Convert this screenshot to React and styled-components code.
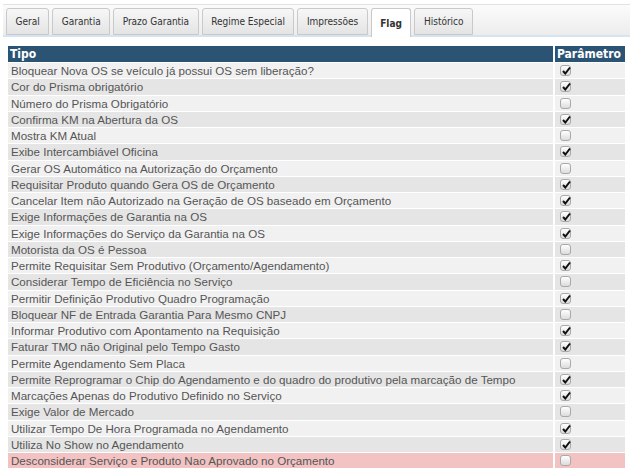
import React from 'react';
import styled, { createGlobalStyle } from 'styled-components';

const Global = createGlobalStyle`
    html, body {
        margin: 0;
        padding: 0;
        background: #ffffff;
    }
`;

const Page = styled.div`
    padding: 4px 1px 0 3px;
    font-family: "Liberation Sans", Arial, sans-serif;
`;

const TabBar = styled.div`
    display: flex;
    align-items: flex-end;
    gap: 3px;
    height: 30px;
    padding: 0 0 0 3px;
    border-top: 1px solid #e2e2e2;
    border-bottom: 2px solid #d6e4f2;
    background: linear-gradient(#fbfbfb, #ececec);
`;

const Tab = styled.div`
    display: flex;
    align-items: center;
    height: ${p => (p.$active ? '29px' : '27px')};
    margin-bottom: ${p => (p.$active ? '-2px' : '0')};
    padding: 0 8.5px;
    box-sizing: border-box;
    border: 1px solid #c9c9c9;
    border-bottom: ${p => (p.$active ? 'none' : '1px solid #c9c9c9')};
    border-radius: 3px 3px 0 0;
    background: ${p => (p.$active ? '#ffffff' : 'linear-gradient(#f7f7f7, #e4e4e4)')};
    color: #333333;
    font-family: "DejaVu Sans Condensed", "DejaVu Sans", sans-serif;
    font-size: 10px;
    font-weight: ${p => (p.$active ? 'bold' : 'normal')};
`;

const Table = styled.table`
    margin: 8px 0 0 3px;
    width: 621px;
    border-collapse: separate;
    border-spacing: 2px 1px;
    table-layout: fixed;
`;

const Head = styled.th`
    height: 16px;
    padding: 0 0 0 2px;
    background: #2b5374;
    color: #ffffff;
    text-align: left;
    font-family: "DejaVu Sans Condensed", "DejaVu Sans", sans-serif;
    font-size: 12px;
    font-weight: bold;
    width: ${p => p.$w || 'auto'};
`;

const Cell = styled.td`
    height: 15.25px;
    padding: 0 0 0 3px;
    background: ${p => (p.$alert ? '#f3c3c3' : p.$odd ? '#e5e5e5' : '#f1f1f1')};
    color: #555555;
    font-size: 11.6px;
    line-height: 15px;
    white-space: nowrap;
    overflow: hidden;
`;

const Box = styled.span`
    display: block;
    width: 11px;
    height: 11px;
    margin-left: 2px;
    box-sizing: border-box;
    border: 1px solid #a9a9a9;
    border-radius: 3px;
    background: linear-gradient(#ffffff, #dcdcdc);
    position: relative;

    svg {
        position: absolute;
        left: 1px;
        top: 0px;
    }
`;

const tabs = ['Geral', 'Garantia', 'Prazo Garantia', 'Regime Especial', 'Impressões', 'Flag', 'Histórico'];

const flags = [
    ['Bloquear Nova OS se veículo já possui OS sem liberação?', true],
    ['Cor do Prisma obrigatório', true],
    ['Número do Prisma Obrigatório', false],
    ['Confirma KM na Abertura da OS', true],
    ['Mostra KM Atual', false],
    ['Exibe Intercambiável Oficina', true],
    ['Gerar OS Automático na Autorização do Orçamento', false],
    ['Requisitar Produto quando Gera OS de Orçamento', true],
    ['Cancelar Item não Autorizado na Geração de OS baseado em Orçamento', true],
    ['Exige Informações de Garantia na OS', true],
    ['Exige Informações do Serviço da Garantia na OS', true],
    ['Motorista da OS é Pessoa', false],
    ['Permite Requisitar Sem Produtivo (Orçamento/Agendamento)', true],
    ['Considerar Tempo de Eficiência no Serviço', false],
    ['Permitir Definição Produtivo Quadro Programação', true],
    ['Bloquear NF de Entrada Garantia Para Mesmo CNPJ', false],
    ['Informar Produtivo com Apontamento na Requisição', true],
    ['Faturar TMO não Original pelo Tempo Gasto', true],
    ['Permite Agendamento Sem Placa', false],
    ['Permite Reprogramar o Chip do Agendamento e do quadro do produtivo pela marcação de Tempo', true],
    ['Marcações Apenas do Produtivo Definido no Serviço', true],
    ['Exige Valor de Mercado', false],
    ['Utilizar Tempo De Hora Programada no Agendamento', true],
    ['Utiliza No Show no Agendamento', true],
    ['Desconsiderar Serviço e Produto Nao Aprovado no Orçamento', false],
];

const Check = ({ on }) => (
    <Box>
        {on && (
            <svg width="9" height="9" viewBox="0 0 9 9">
                <path d="M1 5 L3.3 7.5 L8 1.5" fill="none" stroke="#111" strokeWidth="2" />
            </svg>
        )}
    </Box>
);

export default function App() {
    return (
        <Page>
            <Global />
            <TabBar>
                {tabs.map(t => (
                    <Tab key={t} $active={t === 'Flag'}>{t}</Tab>
                ))}
            </TabBar>
            <Table>
                <thead>
                    <tr>
                        <Head>Tipo</Head>
                        <Head $w="68px">Parâmetro</Head>
                    </tr>
                </thead>
                <tbody>
                    {flags.map(([label, on], i) => {
                        const alert = i === flags.length - 1;
                        return (
                            <tr key={label}>
                                <Cell $odd={i % 2 === 1} $alert={alert}>{label}</Cell>
                                <Cell $odd={i % 2 === 1} $alert={alert}><Check on={on} /></Cell>
                            </tr>
                        );
                    })}
                </tbody>
            </Table>
        </Page>
    );
}
